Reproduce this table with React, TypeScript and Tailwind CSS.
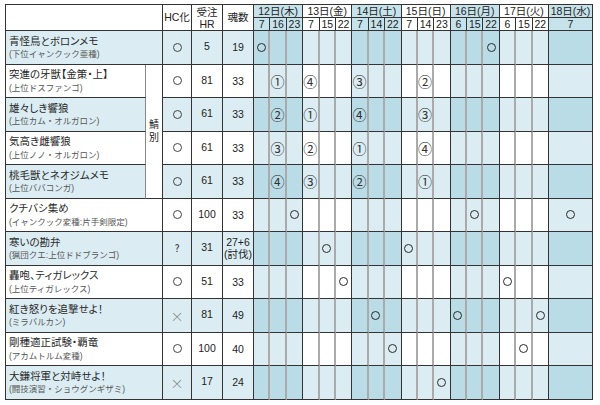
const days = [
  { label: "12日(木)", times: ["7", "16", "23"] },
  { label: "13日(金)", times: ["7", "15", "22"] },
  { label: "14日(土)", times: ["7", "14", "22"] },
  { label: "15日(日)", times: ["7", "14", "23"] },
  { label: "16日(月)", times: ["6", "15", "22"] },
  { label: "17日(火)", times: ["6", "15", "22"] },
  { label: "18日(水)", times: ["7"] },
];

type Quest = {
  name: string;
  sub: string;
  hc: string;
  hr: string;
  soul: string[];
  marks: Record<number, string>;
};

// slot index: 12日 0-2, 13日 3-5, 14日 6-8, 15日 9-11, 16日 12-14, 17日 15-17, 18日 18
const quests: Quest[] = [
  { name: "青怪鳥とボロンメモ", sub: "(下位イャンクック亜種)", hc: "○", hr: "5", soul: ["19"], marks: { 0: "○", 14: "○" } },
  { name: "突進の牙獣【金策・上】", sub: "(上位ドスファンゴ)", hc: "○", hr: "81", soul: ["33"], marks: { 1: "①", 3: "④", 6: "③", 10: "②" } },
  { name: "雄々しき響狼", sub: "(上位カム・オルガロン)", hc: "○", hr: "61", soul: ["33"], marks: { 1: "②", 3: "①", 6: "④", 10: "③" } },
  { name: "気高き雌響狼", sub: "(上位ノノ・オルガロン)", hc: "○", hr: "61", soul: ["33"], marks: { 1: "③", 3: "②", 6: "①", 10: "④" } },
  { name: "桃毛獣とネオジムメモ", sub: "(上位ババコンガ)", hc: "○", hr: "61", soul: ["33"], marks: { 1: "④", 3: "③", 6: "②", 10: "①" } },
  { name: "クチバシ集め", sub: "(イャンクック変種:片手剣限定)", hc: "○", hr: "100", soul: ["33"], marks: { 2: "○", 13: "○", 18: "○" } },
  { name: "寒いの勘弁", sub: "(猟団クエ:上位ドドブランゴ)", hc: "?", hr: "31", soul: ["27+6", "(討伐)"], marks: { 4: "○", 9: "○" } },
  { name: "轟咆、ティガレックス", sub: "(上位ティガレックス)", hc: "○", hr: "51", soul: ["33"], marks: { 5: "○", 15: "○" } },
  { name: "紅き怒りを追撃せよ！", sub: "(ミラバルカン)", hc: "×", hr: "81", soul: ["49"], marks: { 7: "○", 12: "○", 17: "○" } },
  { name: "剛種適正試験・覇竜", sub: "(アカムトルム変種)", hc: "○", hr: "100", soul: ["40"], marks: { 8: "○", 16: "○" } },
  { name: "大鎌将軍と対峙せよ！", sub: "(闘技演習・ショウグンギザミ)", hc: "×", hr: "17", soul: ["24"], marks: { 11: "○" } },
];

const slots = Array.from({ length: 19 }, (_, i) => i);

function dayOf(slot: number) {
  return slot < 18 ? Math.floor(slot / 3) : 6;
}

function Mark({ value }: { value: string }) {
  if (value === "○") {
    return <span className="block h-[9px] w-[9px] rounded-full border-[1.5px] border-[#2a2a2a]" />;
  }
  return <span className="font-['Noto_Sans_CJK_JP',sans-serif] text-[14px] leading-none text-[#333]">{value}</span>;
}

export default function App() {
  return (
    <div className="w-[600px] h-[405px] bg-white pt-[4px] pl-[5px] font-['Liberation_Sans','Noto_Sans_CJK_JP',sans-serif] text-[#222]">
      <div className="grid w-[588px] grid-cols-[140px_17px_29px_31px_31px_repeat(18,minmax(0,1fr))_44px] grid-rows-[13px_13px_repeat(11,33.5px)] border-l border-t border-[#333]">

        {/* HEADER */}
        <div className="col-span-2 row-span-2 border-r border-b border-[#333] bg-white" />
        <div className="row-span-2 flex items-center justify-center border-r border-b border-[#333] text-[10.5px]">
          HC化
        </div>
        <div className="row-span-2 flex flex-col items-center justify-center border-r border-b border-[#333] text-[10.5px] leading-[12px]">
          <span>受注</span>
          <span>HR</span>
        </div>
        <div className="row-span-2 flex items-center justify-center border-r border-b border-[#333] text-[10.5px]">
          魂数
        </div>
        {days.map((d, i) => (
          <div
            key={d.label}
            className={
              "flex items-center justify-center border-r border-b border-[#333] text-[10.5px] leading-none " +
              (i === 6 ? "col-span-1 " : "col-span-3 ") +
              (i % 2 === 0 ? "bg-[#c6e3ec]" : "bg-white")
            }
          >
            {d.label}
          </div>
        ))}
        {days.map((d, i) =>
          d.times.map((t, j) => (
            <div
              key={d.label + t + j}
              className={
                "flex items-center justify-center border-r border-b border-[#333] text-[10.5px] leading-none " +
                (i % 2 === 0 ? "bg-[#c6e3ec]" : "bg-white")
              }
            >
              {t}
            </div>
          ))
        )}

        {/* ROWS */}
        {quests.map((q, r) => {
          const blue = r % 2 === 0;
          const rowBg = blue ? "bg-[#dbedf3]" : "bg-white";
          const grouped = r >= 1 && r <= 4;
          return [
            <div
              key={"name" + r}
              className={
                "flex flex-col justify-center pl-[3px] border-b border-[#333] " +
                rowBg +
                (grouped ? " border-r border-r-[#888]" : " col-span-2 border-r")
              }
            >
              <span className="text-[10.5px] leading-none text-[#2a2a2a] [font-feature-settings:'palt']">{q.name}</span>
              <span className="mt-[4px] text-[8.5px] leading-none text-[#555]">{q.sub}</span>
            </div>,
            r === 1 ? (
              <div
                key="saba"
                className="row-span-4 flex flex-col items-center justify-center border-r border-b border-[#333] bg-white text-[10px] leading-[13px]"
              >
                <span>鯖</span>
                <span>別</span>
              </div>
            ) : null,
            <div
              key={"hc" + r}
              className={"flex items-center justify-center border-r border-b border-[#333] font-['Noto_Sans_CJK_JP',sans-serif] " + rowBg}
            >
              {q.hc === "×" ? (
                <span className="text-[13px] font-light leading-none text-[#777]">×</span>
              ) : q.hc === "?" ? (
                <span className="text-[10px] leading-none">?</span>
              ) : (
                <span className="block h-[9px] w-[9px] rounded-full border border-[#444]" />
              )}
            </div>,
            <div
              key={"hr" + r}
              className={"flex items-center justify-center border-r border-b border-[#333] text-[10.5px] " + rowBg}
            >
              {q.hr}
            </div>,
            <div
              key={"soul" + r}
              className={"flex flex-col items-center justify-center border-r border-b border-[#333] text-[10.5px] leading-[12px] " + rowBg}
            >
              {q.soul.map((s) => (
                <span key={s}>{s}</span>
              ))}
            </div>,
            ...slots.map((s) => {
              const groupA = dayOf(s) % 2 === 0;
              const bg = blue
                ? groupA
                  ? "bg-[#b9dce7]"
                  : "bg-[#dbedf3]"
                : groupA
                ? "bg-[#dbedf3]"
                : "bg-white";
              const lastOfDay = s === 18 || s % 3 === 2;
              return (
                <div
                  key={"slot" + r + "-" + s}
                  className={
                    "flex items-center justify-center border-b border-[#333] " +
                    bg +
                    (lastOfDay ? " border-r" : " border-r-2 border-r-[#aaa]")
                  }
                >
                  {q.marks[s] ? <Mark value={q.marks[s]} /> : null}
                </div>
              );
            }),
          ];
        })}
      </div>
    </div>
  );
}
